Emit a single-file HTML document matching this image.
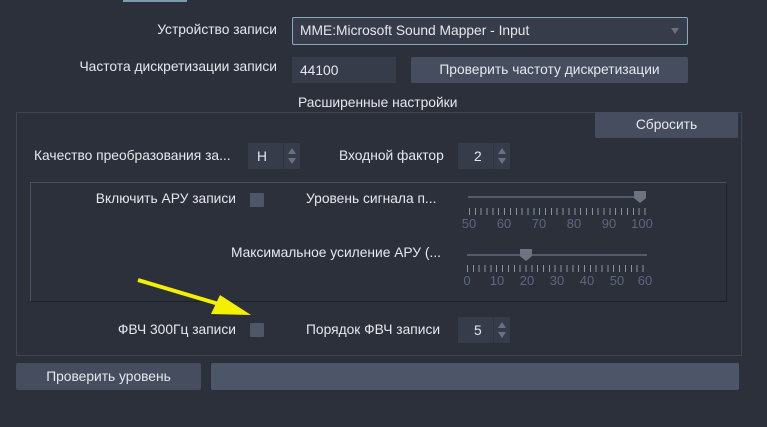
<!DOCTYPE html>
<html><head><meta charset="utf-8"><style>
*{margin:0;padding:0;box-sizing:border-box}
body{width:767px;height:427px;background:#2b303b;font-family:"Liberation Sans",sans-serif;font-size:13.8px;color:#e6e8ec;position:relative;overflow:hidden}
.a{position:absolute}
.lbl{position:absolute;white-space:nowrap}
.btn{position:absolute;background:#464d5f;border-radius:2px;text-align:center;color:#e6e8ec}
.inp{position:absolute;background:#363c4a}
.spin{position:absolute;background:#363c4a}
.spin .arr{position:absolute;right:0;top:0;width:17px;height:100%;border-left:1px solid #2f3440}
.spin .arr:before{content:"";position:absolute;left:4px;top:5px;border-left:4px solid transparent;border-right:4px solid transparent;border-bottom:6px solid #6a7282}
.spin .arr:after{content:"";position:absolute;left:4px;top:15px;border-left:4px solid transparent;border-right:4px solid transparent;border-top:6px solid #6a7282}
.cb{position:absolute;width:14px;height:14px;background:#4f5668;border-radius:1px}
.track{position:absolute;height:2px;background:#545b6b}
.ticks{position:absolute;height:7px;background:repeating-linear-gradient(90deg,#8c92a0 0 1px,transparent 1px 5.85px)}
.nums{position:absolute;font-size:13px;color:#5e6680}
.nums span{position:absolute;transform:translateX(-50%)}
.handle{position:absolute;width:12px;height:12px;background:#6d7380;clip-path:polygon(0 0,100% 0,100% 60%,50% 100%,0 60%)}
</style></head><body>
<div class="a" style="left:123px;top:0;width:64px;height:2px;background:#7a9cb0"></div>

<div class="lbl" style="right:490px;top:22px">Устройство записи</div>
<div class="a" style="left:292px;top:17px;width:396px;height:28px;background:#363c4a;border:1px solid #8aa9b8;border-radius:2px;padding:5px 7px">MME:Microsoft Sound Mapper - Input</div>
<div class="a" style="left:671px;top:28px;border-left:4px solid transparent;border-right:4px solid transparent;border-top:6px solid #6a7080"></div>

<div class="lbl" style="right:490px;top:59px">Частота дискретизации записи</div>
<div class="inp" style="left:292px;top:57px;width:104px;height:26px;padding:6px 8px">44100</div>
<div class="btn" style="left:411px;top:57px;width:277px;height:26px;padding-top:5px">Проверить частоту дискретизации</div>

<div class="a" style="left:298px;top:95px">Расширенные настройки</div>
<div class="a" style="left:16px;top:112px;width:726px;height:244px;border:1px solid #3f4553"></div>
<div class="btn" style="left:595px;top:112px;width:143px;height:26px;padding-top:5px">Сбросить</div>

<div class="lbl" style="left:34px;top:148px">Качество преобразования за...</div>
<div class="spin" style="left:248px;top:143px;width:52px;height:26px"><span class="a" style="left:9px;top:6px">H</span><div class="arr"></div></div>
<div class="lbl" style="left:339px;top:148px">Входной фактор</div>
<div class="spin" style="left:458px;top:143px;width:52px;height:26px"><span class="a" style="left:16px;top:6px">2</span><div class="arr"></div></div>

<div class="a" style="left:30px;top:182px;width:697px;height:120px;border:1px solid #4a5060;border-bottom-color:#1c2028;border-right-color:#1c2028"></div>
<div class="lbl" style="right:531px;top:191px">Включить АРУ записи</div>
<div class="cb" style="left:250px;top:193px"></div>
<div class="lbl" style="left:306px;top:191px">Уровень сигнала п...</div>
<div class="track" style="left:468px;top:196px;width:178px"></div>
<div class="handle" style="left:634px;top:191px"></div>
<div class="ticks" style="left:469px;top:208px;width:177px"></div>
<div class="nums" style="left:0;top:216px"><span style="left:469px">50</span><span style="left:504px">60</span><span style="left:539px">70</span><span style="left:574px">80</span><span style="left:609px">90</span><span style="left:642px">100</span></div>

<div class="lbl" style="right:326px;top:245px">Максимальное усиление АРУ (...</div>
<div class="track" style="left:467px;top:254px;width:180px"></div>
<div class="handle" style="left:520px;top:249px"></div>
<div class="ticks" style="left:467px;top:265px;width:180px"></div>
<div class="nums" style="left:0;top:273px"><span style="left:467px">0</span><span style="left:497px">10</span><span style="left:527px">20</span><span style="left:557px">30</span><span style="left:587px">40</span><span style="left:617px">50</span><span style="left:645px">60</span></div>

<div class="lbl" style="right:531px;top:322px">ФВЧ 300Гц записи</div>
<div class="cb" style="left:250px;top:323px"></div>
<div class="lbl" style="left:306px;top:322px">Порядок ФВЧ записи</div>
<div class="spin" style="left:458px;top:317px;width:52px;height:26px"><span class="a" style="left:16px;top:6px">5</span><div class="arr"></div></div>

<div class="btn" style="left:16px;top:363px;width:185px;height:27px;padding-top:6px">Проверить уровень</div>
<div class="a" style="left:211px;top:363px;width:528px;height:27px;background:#4d5569;border-radius:2px"></div>

<svg class="a" style="left:0;top:0" width="767" height="427"><line x1="138" y1="280" x2="222" y2="305" stroke="#f4f000" stroke-width="4"/><polygon points="251,315 211,314 220,295" fill="#f4f000"/></svg>
</body></html>
